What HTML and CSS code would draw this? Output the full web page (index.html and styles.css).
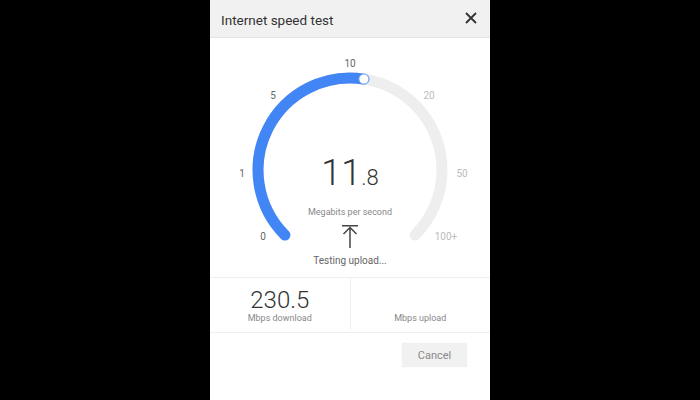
FILE: index.html
```html
<!DOCTYPE html>
<html>
<head>
<meta charset="utf-8">
<link rel="stylesheet" href="styles.css">
</head>
<body>
<div class="dialog">
  <div class="header">
    <span class="title">Internet speed test</span>
    <svg class="close" width="12" height="12" viewBox="0 0 12 12"><path d="M1 1L11 11M11 1L1 11" stroke="#333" stroke-width="1.8" fill="none"/></svg>
  </div>
  <div class="gauge">
    <svg class="dial" width="280" height="239" viewBox="0 0 280 239">
      <path d="M74.95 197.05 A92 92 0 1 1 205.05 197.05" stroke="#eeeeee" stroke-width="11" fill="none" stroke-linecap="round"/>
      <path d="M74.95 197.05 A92 92 0 0 1 153.9 41.1" stroke="#4285f4" stroke-width="11" fill="none" stroke-linecap="round"/>
      <circle cx="153.9" cy="41.1" r="5" fill="#fff" stroke="#7aa7f0" stroke-width="1"/>
      <g class="ticks">
        <text x="53" y="198" class="tk on">0</text>
        <text x="32" y="135" class="tk on">1</text>
        <text x="63" y="57" class="tk on">5</text>
        <text x="140" y="25" class="tk on">10</text>
        <text x="219" y="57" class="tk off">20</text>
        <text x="252" y="135" class="tk off">50</text>
        <text x="236" y="198" class="tk off">100+</text>
      </g>
    </svg>
    <div class="readout">
      <div class="speed">11<span class="dec">.8</span></div>
      <div class="unit">Megabits per second</div>
      <svg class="arrow" width="18" height="23" viewBox="0 0 18 23"><path d="M1 0.75H17M9 2.5V23M2.5 9L9 2.5L15.5 9" stroke="#444" stroke-width="1.5" fill="none"/></svg>
      <div class="status">Testing upload...</div>
    </div>
  </div>
  <div class="stats">
    <div class="stat">
      <div class="value">230.5</div>
      <div class="label">Mbps download</div>
    </div>
    <div class="stat second">
      <div class="value">&nbsp;</div>
      <div class="label">Mbps upload</div>
    </div>
  </div>
  <div class="footer">
    <button class="cancel">Cancel</button>
  </div>
</div>
</body>
</html>
```
FILE: styles.css
```css
html, body {
  margin: 0;
  padding: 0;
  background: #000;
  font-family: Roboto, "Liberation Sans", Arial, sans-serif;
}
.dialog {
  width: 280px;
  height: 400px;
  margin: 0 auto;
  background: #fff;
  display: flex;
  flex-direction: column;
}
.header {
  height: 38px;
  box-sizing: border-box;
  background: #f1f1f1;
  border-bottom: 1px solid #e4e4e4;
  display: flex;
  align-items: center;
  justify-content: space-between;
  padding: 0 13px 0 11px;
}
.title {
  font-size: 13.5px;
  color: #333;
  padding-top: 2px;
}
.close { display: block; margin-top: -2px; }
.gauge {
  position: relative;
  height: 239px;
  flex: none;
}
.dial {
  position: absolute;
  left: 0;
  top: 0;
}
.tk {
  font-family: Roboto, "Liberation Sans", Arial, sans-serif;
  font-size: 10px;
  text-anchor: middle;
  dominant-baseline: central;
}
.tk.on { fill: #666; }
.tk.off { fill: #bbb; }
.readout {
  position: relative;
  display: flex;
  flex-direction: column;
  align-items: center;
  padding-top: 117px;
}
.speed {
  font-size: 36px;
  line-height: 36px;
  font-weight: 300;
  color: #333;
}
.dec { font-size: 22px; }
.unit {
  margin-top: 10px;
  font-size: 9px;
  line-height: 12px;
  color: #888;
}
.arrow { display: block; margin-top: 7px; }
.status {
  margin-top: 6px;
  font-size: 10px;
  line-height: 14px;
  color: #666;
}
.stats {
  display: flex;
  height: 56px;
  box-sizing: border-box;
  border-top: 1px solid #efefef;
  border-bottom: 1px solid #efefef;
  flex: none;
}
.stat {
  flex: 1;
  display: flex;
  flex-direction: column;
  align-items: center;
  padding-top: 9px;
}
.stat.second { border-left: 1px solid #efefef; margin-bottom: 2px; }
.value {
  font-size: 24px;
  line-height: 26px;
  font-weight: 300;
  color: #333;
}
.label {
  font-size: 9px;
  line-height: 10px;
  color: #888;
}
.footer {
  display: flex;
  justify-content: flex-end;
  padding: 10px 23px 0 0;
}
.cancel {
  width: 65px;
  height: 24px;
  border: none;
  border-radius: 2px;
  background: #f1f1f1;
  color: #888;
  font-family: Roboto, "Liberation Sans", Arial, sans-serif;
  font-size: 11px;
  box-shadow: 0 0 1px rgba(0,0,0,0.15);
}
```
